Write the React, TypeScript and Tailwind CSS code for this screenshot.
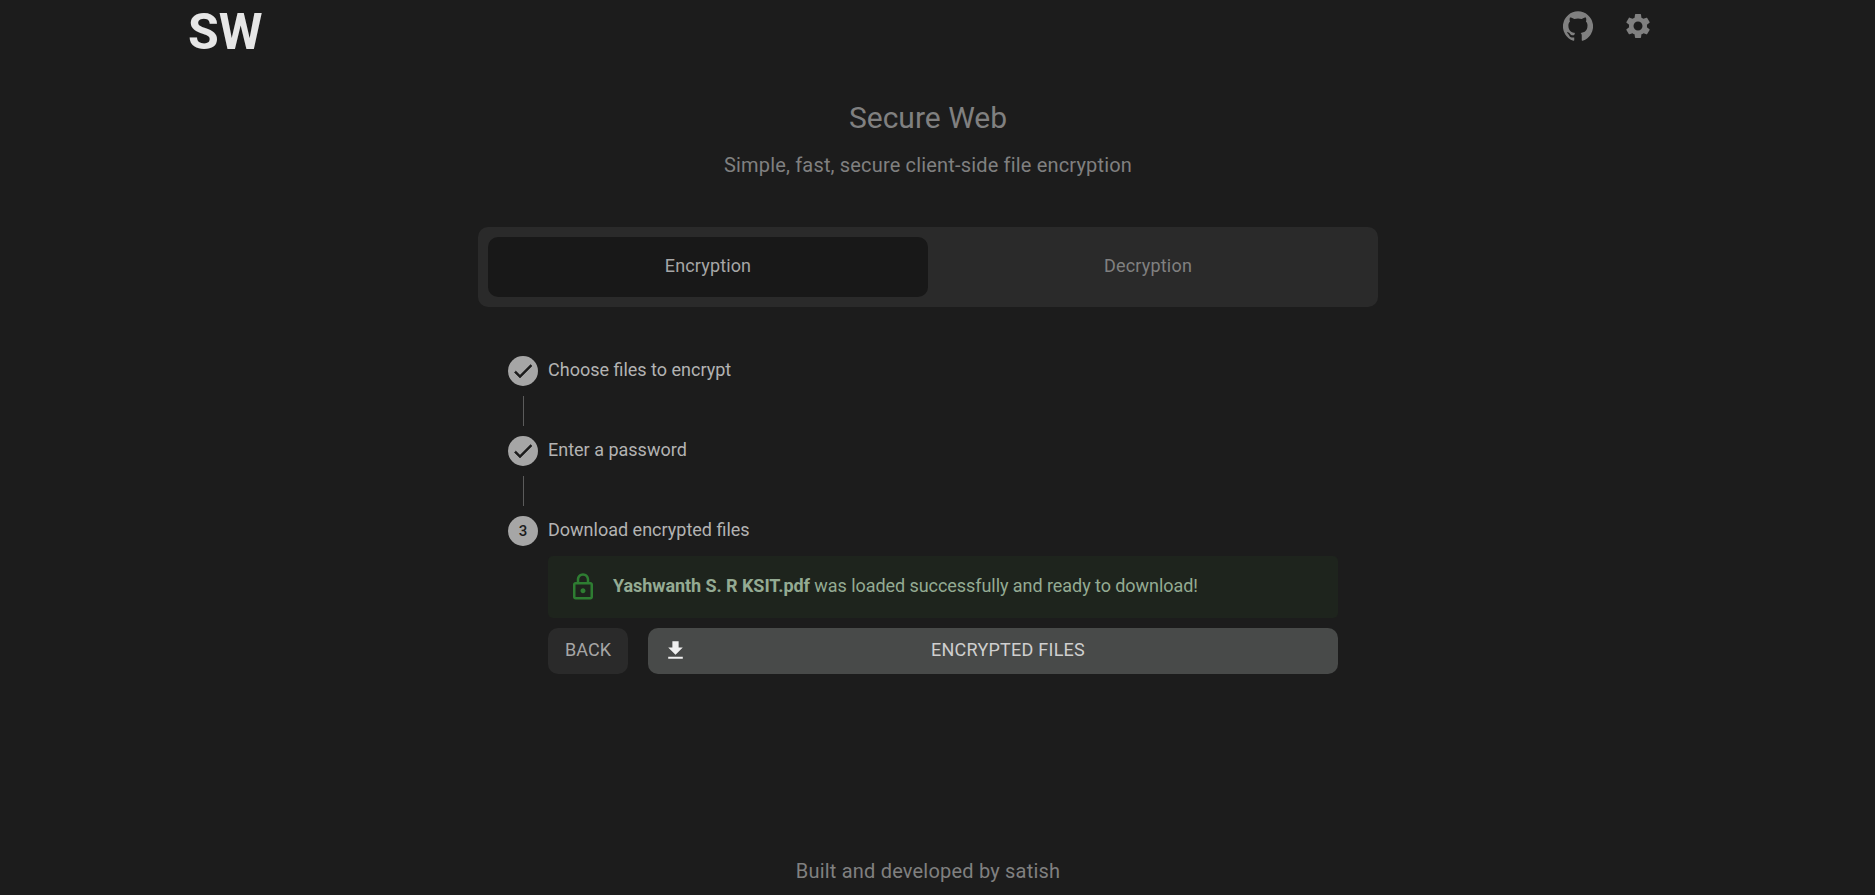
import React from "react";

const P = {
  github: "M12 .3a12 12 0 0 0-3.8 23.4c.6.1.8-.3.8-.6v-2c-3.3.7-4-1.6-4-1.6-.6-1.4-1.4-1.8-1.4-1.8-1-.7.1-.7.1-.7 1.2 0 1.9 1.2 1.9 1.2 1 1.8 2.8 1.3 3.5 1 0-.8.4-1.3.7-1.6-2.7-.3-5.5-1.3-5.5-6 0-1.2.5-2.3 1.3-3.1-.2-.4-.6-1.6 0-3.2 0 0 1-.3 3.4 1.2a11.5 11.5 0 0 1 6 0c2.3-1.5 3.3-1.2 3.3-1.2.6 1.6.2 2.8 0 3.2.9.8 1.3 1.9 1.3 3.2 0 4.6-2.8 5.6-5.5 5.9.5.4.9 1 .9 2.2v3.3c0 .3.1.7.8.6A12 12 0 0 0 12 .3",
  gear: "M19.14 12.94c.04-.3.06-.61.06-.94 0-.32-.02-.64-.07-.94l2.03-1.58c.18-.14.23-.41.12-.61l-1.92-3.32c-.12-.22-.37-.29-.59-.22l-2.39.96c-.5-.38-1.03-.7-1.62-.94l-.36-2.54c-.04-.24-.24-.41-.48-.41h-3.84c-.24 0-.43.17-.47.41l-.36 2.54c-.59.24-1.13.57-1.62.94l-2.39-.96c-.22-.08-.47 0-.59.22L2.74 8.87c-.12.21-.08.47.12.61l2.03 1.58c-.05.3-.09.63-.09.94s.02.64.07.94l-2.03 1.58c-.18.14-.23.41-.12.61l1.92 3.32c.12.22.37.29.59.22l2.39-.96c.5.38 1.03.7 1.62.94l.36 2.54c.05.24.24.41.48.41h3.84c.24 0 .44-.17.47-.41l.36-2.54c.59-.24 1.13-.56 1.62-.94l2.39.96c.22.08.47 0 .59-.22l1.92-3.32c.12-.22.07-.47-.12-.61l-2.01-1.58zM12 15.6c-1.98 0-3.6-1.62-3.6-3.6s1.62-3.6 3.6-3.6 3.6 1.62 3.6 3.6-1.62 3.6-3.6 3.6z",
  lock: "M18 8h-1V6c0-2.76-2.24-5-5-5S7 3.24 7 6v2H6c-1.1 0-2 .9-2 2v10c0 1.1.9 2 2 2h12c1.1 0 2-.9 2-2V10c0-1.1-.9-2-2-2zM9 6c0-1.66 1.34-3 3-3s3 1.34 3 3v2H9V6zm9 14H6V10h12v10zm-6-3c1.1 0 2-.9 2-2s-.9-2-2-2-2 .9-2 2 .9 2 2 2z",
  dl: "M19 9h-4V3H9v6H5l7 7 7-7zM5 18v2h14v-2H5z",
  check: "M9 16.17L4.83 12l-1.42 1.41L9 19 21 7l-1.41-1.41z",
};

function Icon({ d, className }: { d: string; className: string }) {
  return (
    <svg viewBox="0 0 24 24" className={className} fill="currentColor" aria-hidden="true">
      <path d={d} />
    </svg>
  );
}

function StepDot({ children }: { children: React.ReactNode }) {
  return (
    <div className="w-[30px] h-[30px] rounded-full bg-[#a6a6a6] flex items-center justify-center text-[#1c1c1c] text-[15px] font-medium shrink-0">
      {children}
    </div>
  );
}

function Connector() {
  return (
    <div className="ml-[15px] h-[50px] py-[10px] flex">
      <div className="w-px bg-[#5b5b5b]" />
    </div>
  );
}

function Step({ dot, label }: { dot: React.ReactNode; label: string }) {
  return (
    <div className="flex items-center gap-[10px] h-[30px]">
      <StepDot>{dot}</StepDot>
      <span className="text-[18px] leading-[28px] pb-[2px] text-[#b3b3b3]">{label}</span>
    </div>
  );
}

const checkClass = "w-[24px] h-[24px] -mt-[1px] stroke-current stroke-[0.6]";

export default function App() {
  return (
    <div className="w-full h-[895px] bg-[#1c1c1c] overflow-hidden" style={{ fontFamily: "Roboto, sans-serif" }}>
      <div className="w-[1856px] h-full flex flex-col">
        <header className="w-[1480px] mx-auto flex justify-between items-start h-[72px]">
          <div className="text-[50px] font-bold text-[#e6e6e6] leading-[64px]">SW</div>
          <div className="flex gap-[30px] pt-[11px] pr-[15px] text-[#808080]">
            <Icon d={P.github} className="w-[30px] h-[30px]" />
            <Icon d={P.gear} className="w-[30px] h-[30px]" />
          </div>
        </header>

        <div className="text-center mt-[26px]">
          <h1 className="text-[30px] leading-[40px] text-[#808080]">Secure Web</h1>
          <p className="mt-[15px] text-[20px] leading-[24px] tracking-[0.17px] text-[#808080]">
            Simple, fast, secure client-side file encryption
          </p>
        </div>

        <div className="w-[900px] mx-auto mt-[50px] h-[80px] bg-[#2a2a2a] rounded-[10px] p-[10px] flex">
          <div className="flex-1 bg-[#181818] rounded-[10px] flex items-center justify-center pb-[4px] text-[18px] tracking-[0.15px] text-[#a6a6a6]">
            Encryption
          </div>
          <div className="flex-1 flex items-center justify-center pb-[4px] text-[18px] tracking-[0.2px] text-[#808080]">
            Decryption
          </div>
        </div>

        <div className="w-[900px] mx-auto mt-[49px] pl-[30px] pr-[40px]">
          <Step dot={<Icon d={P.check} className={checkClass} />} label="Choose files to encrypt" />
          <Connector />
          <Step dot={<Icon d={P.check} className={checkClass} />} label="Enter a password" />
          <Connector />
          <Step dot="3" label="Download encrypted files" />
          <div className="ml-[40px] mt-[10px]">
            <div className="h-[62px] rounded-[5px] bg-[#1e241d] flex items-center pl-[20px] pb-[4px] text-[18px] tracking-[-0.06px] text-[#94ab93]">
              <Icon d={P.lock} className="w-[30px] h-[30px] text-[#2e7d32] mr-[15px] -mb-[4px]" />
              <span>
                <b className="font-bold">Yashwanth S. R KSIT.pdf</b> was loaded successfully and ready to download!
              </span>
            </div>
            <div className="flex gap-[20px] mt-[10px]">
              <button className="w-[80px] h-[46px] rounded-[10px] bg-[#2a2a2a] pb-[3px] text-[18px] text-[#a6a6a6]">BACK</button>
              <button className="relative flex-1 h-[46px] rounded-[10px] bg-[#484a49] pl-[30px] pb-[3px] text-[18px] tracking-[0.25px] text-[#cfcfcf]">
                <Icon d={P.dl} className="absolute left-[15px] top-[10px] w-[25px] h-[25px] text-[#f0f0f0]" />
                ENCRYPTED FILES
              </button>
            </div>
          </div>
        </div>

        <footer className="mt-auto mb-[12px] text-center text-[20px] leading-[24px] tracking-[0.2px] text-[#808080]">
          Built and developed by satish
        </footer>
      </div>
    </div>
  );
}
